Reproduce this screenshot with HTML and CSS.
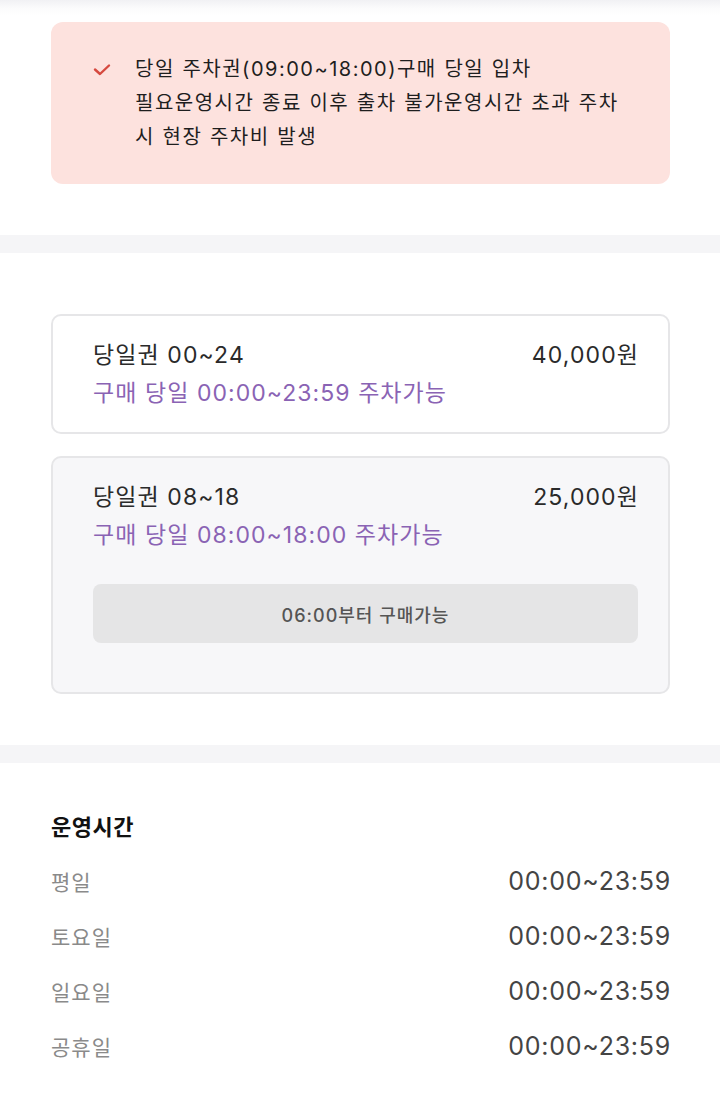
FILE: index.html
```html
<!DOCTYPE html>
<html lang="ko">
<head>
<meta charset="utf-8">
<link rel="stylesheet" href="styles.css">
</head>
<body>
<div class="page">
  <section class="notice-section">
    <div class="notice">
      <svg class="check" width="18" height="14" viewBox="0 0 18 14"><path d="M2 6.5 L7 11 L16 2.5" fill="none" stroke="#d6493f" stroke-width="2.4" stroke-linecap="round" stroke-linejoin="round"/></svg>
      <p class="notice-text">당일 주차권(09:00~18:00)구매 당일 입차<br>필요운영시간 종료 이후 출차 불가운영시간 초과 주차<br>시 현장 주차비 발생</p>
    </div>
  </section>
  <div class="divider"></div>
  <section class="tickets">
    <div class="card">
      <div class="card-head">
        <span class="title">당일권 00~24</span>
        <span class="price">40,000원</span>
      </div>
      <div class="desc">구매 당일 00:00~23:59 주차가능</div>
    </div>
    <div class="card disabled">
      <div class="card-head">
        <span class="title">당일권 08~18</span>
        <span class="price">25,000원</span>
      </div>
      <div class="desc">구매 당일 08:00~18:00 주차가능</div>
      <div class="btn">06:00부터 구매가능</div>
    </div>
  </section>
  <div class="divider"></div>
  <section class="hours">
    <h2 class="hours-title">운영시간</h2>
    <div class="row"><span class="day">평일</span><span class="time">00:00~23:59</span></div>
    <div class="row"><span class="day">토요일</span><span class="time">00:00~23:59</span></div>
    <div class="row"><span class="day">일요일</span><span class="time">00:00~23:59</span></div>
    <div class="row"><span class="day">공휴일</span><span class="time">00:00~23:59</span></div>
  </section>
</div>
</body>
</html>
```

FILE: styles.css
```css
* { box-sizing: border-box; }
html, body { margin: 0; padding: 0; background: #fff; }
body {
  font-family: "Inter", "Noto Sans CJK KR", sans-serif;
  color: #222;
}
.page { width: 720px; }

.notice-section {
  padding: 22px 50px 51px 51px;
  background: linear-gradient(#f1f1f4 0px, #fbfbfc 8px, #ffffff 16px);
}
.notice {
  background: #fde2de;
  border-radius: 12px;
  padding: 30px 20px 29px 42px;
  display: flex;
  align-items: flex-start;
  gap: 24px;
  height: 162px;
}
.check { margin-top: 11px; flex: none; }
.notice-text {
  margin: 0;
  font-size: 20px;
  line-height: 34px;
  color: #1e1e1e;
  letter-spacing: 1.5px;
  word-spacing: 0.5px;
  white-space: nowrap;
}

.divider { height: 18px; background: #f5f5f7; }

.tickets {
  padding: 61px 50px 51px 51px;
  display: flex;
  flex-direction: column;
  gap: 22px;
}
.card {
  border: 2px solid #e6e6e8;
  border-radius: 10px;
  padding: 23px 30px 23px 40px;
  background: #fff;
}
.card.disabled { background: #f7f7f9; padding-bottom: 49px; }
.card-head {
  display: flex;
  justify-content: space-between;
  align-items: center;
  height: 32px;
}
.title, .price {
  font-size: 23px;
  line-height: 32px;
  color: #2a2a2a;
  letter-spacing: 1.1px;
}
.price { margin-right: -1px; }
.desc {
  margin-top: 6px;
  font-size: 23px;
  line-height: 32px;
  color: #8a63b4;
  letter-spacing: 1.05px;
}
.btn {
  margin-top: 33px;
  height: 59px;
  border-radius: 8px;
  background: #e5e5e6;
  display: flex;
  align-items: center;
  justify-content: center;
  font-size: 18px;
  color: #555;
  font-weight: 500;
  letter-spacing: 1px;
}

.hours {
  padding: 49px 50px 30px 51px;
}
.hours-title {
  margin: 0 0 11px;
  font-size: 22px;
  line-height: 30px;
  font-weight: 700;
  color: #111;
  letter-spacing: 0.5px;
}
.row {
  display: flex;
  justify-content: space-between;
  align-items: center;
  height: 55px;
}
.day { font-size: 21px; color: #8a8a8a; letter-spacing: 1px; }
.time {
  font-size: 25px;
  color: #444;
  letter-spacing: 0.75px;
  margin-right: -1px;
}
```
